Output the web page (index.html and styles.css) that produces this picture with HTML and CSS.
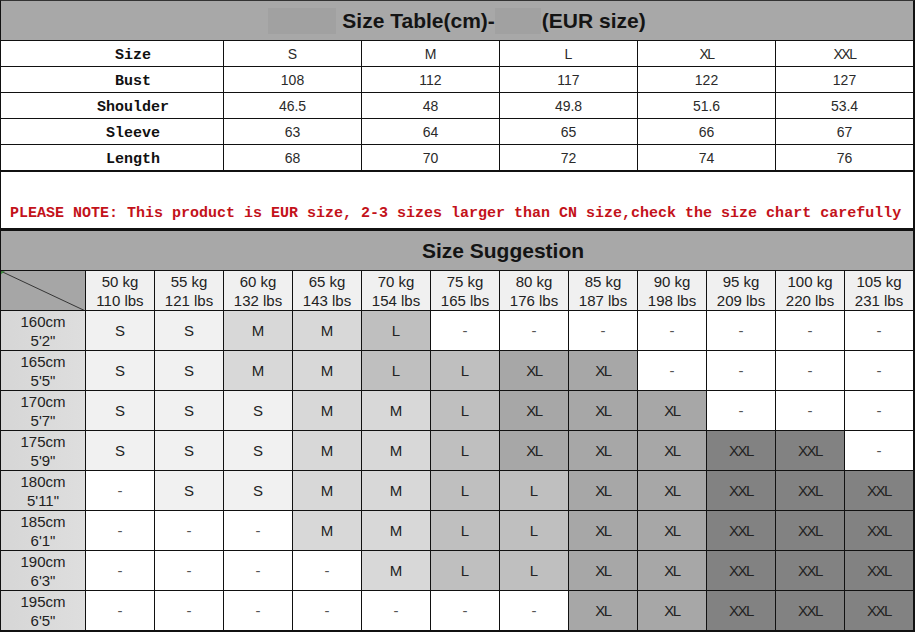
FILE: index.html
```html
<!DOCTYPE html>
<html>
<head>
<meta charset="utf-8">
<link rel="stylesheet" href="styles.css">
</head>
<body>
<div class="sheet">
  <div class="title">
    <span class="blur b1"></span>
    <span class="ttext">Size Table(cm)-</span>
    <span class="blur b2"></span>
    <span class="ttext t2">(EUR size)</span>
  </div>
  <div class="t1">
    <div class="c lab">Size</div><div class="c">S</div><div class="c">M</div><div class="c">L</div><div class="c x">XL</div><div class="c x">XXL</div>
    <div class="c lab">Bust</div><div class="c">108</div><div class="c">112</div><div class="c">117</div><div class="c">122</div><div class="c">127</div>
    <div class="c lab">Shoulder</div><div class="c">46.5</div><div class="c">48</div><div class="c">49.8</div><div class="c">51.6</div><div class="c">53.4</div>
    <div class="c lab">Sleeve</div><div class="c">63</div><div class="c">64</div><div class="c">65</div><div class="c">66</div><div class="c">67</div>
    <div class="c lab">Length</div><div class="c">68</div><div class="c">70</div><div class="c">72</div><div class="c">74</div><div class="c">76</div>
  </div>
  <div class="note">PLEASE NOTE: This product is EUR size, 2-3 sizes larger than CN size,check the size chart carefully</div>
  <div class="title2">Size Suggestion</div>
  <div class="t2g">
    <div class="g corner"><svg width="85" height="40" viewBox="0 0 85 40"><line x1="0" y1="0" x2="85" y2="40" stroke="#333" stroke-width="1"/><path d="M0 0 L4 0 L0 3 Z" fill="#3a8a3a"/></svg></div>
    <div class="g w">50 kg<br>110 lbs</div><div class="g w">55 kg<br>121 lbs</div><div class="g w">60 kg<br>132 lbs</div><div class="g w">65 kg<br>143 lbs</div><div class="g w">70 kg<br>154 lbs</div><div class="g w">75 kg<br>165 lbs</div><div class="g w">80 kg<br>176 lbs</div><div class="g w">85 kg<br>187 lbs</div><div class="g w">90 kg<br>198 lbs</div><div class="g w">95 kg<br>209 lbs</div><div class="g w">100 kg<br>220 lbs</div><div class="g w">105 kg<br>231 lbs</div>

    <div class="g h">160cm<br>5'2"</div><div class="g s">S</div><div class="g s">S</div><div class="g m">M</div><div class="g m">M</div><div class="g l">L</div><div class="g n">-</div><div class="g n">-</div><div class="g n">-</div><div class="g n">-</div><div class="g n">-</div><div class="g n">-</div><div class="g n">-</div>

    <div class="g h">165cm<br>5'5"</div><div class="g s">S</div><div class="g s">S</div><div class="g m">M</div><div class="g m">M</div><div class="g l">L</div><div class="g l">L</div><div class="g xl">XL</div><div class="g xl">XL</div><div class="g n">-</div><div class="g n">-</div><div class="g n">-</div><div class="g n">-</div>

    <div class="g h">170cm<br>5'7"</div><div class="g s">S</div><div class="g s">S</div><div class="g s">S</div><div class="g m">M</div><div class="g m">M</div><div class="g l">L</div><div class="g xl">XL</div><div class="g xl">XL</div><div class="g xl">XL</div><div class="g n">-</div><div class="g n">-</div><div class="g n">-</div>

    <div class="g h">175cm<br>5'9"</div><div class="g s">S</div><div class="g s">S</div><div class="g s">S</div><div class="g m">M</div><div class="g m">M</div><div class="g l">L</div><div class="g xl">XL</div><div class="g xl">XL</div><div class="g xl">XL</div><div class="g xxl">XXL</div><div class="g xxl">XXL</div><div class="g n">-</div>

    <div class="g h">180cm<br>5'11"</div><div class="g n">-</div><div class="g s">S</div><div class="g s">S</div><div class="g m">M</div><div class="g m">M</div><div class="g l">L</div><div class="g l">L</div><div class="g xl">XL</div><div class="g xl">XL</div><div class="g xxl">XXL</div><div class="g xxl">XXL</div><div class="g xxl">XXL</div>

    <div class="g h">185cm<br>6'1"</div><div class="g n">-</div><div class="g n">-</div><div class="g n">-</div><div class="g m">M</div><div class="g m">M</div><div class="g l">L</div><div class="g l">L</div><div class="g xl">XL</div><div class="g xl">XL</div><div class="g xxl">XXL</div><div class="g xxl">XXL</div><div class="g xxl">XXL</div>

    <div class="g h">190cm<br>6'3"</div><div class="g n">-</div><div class="g n">-</div><div class="g n">-</div><div class="g n">-</div><div class="g m">M</div><div class="g l">L</div><div class="g l">L</div><div class="g xl">XL</div><div class="g xl">XL</div><div class="g xxl">XXL</div><div class="g xxl">XXL</div><div class="g xxl">XXL</div>

    <div class="g h">195cm<br>6'5"</div><div class="g n">-</div><div class="g n">-</div><div class="g n">-</div><div class="g n">-</div><div class="g n">-</div><div class="g n">-</div><div class="g n">-</div><div class="g xl">XL</div><div class="g xl">XL</div><div class="g xxl">XXL</div><div class="g xxl">XXL</div><div class="g xxl">XXL</div>
  </div>
</div>
</body>
</html>
```
FILE: styles.css
```css
* { box-sizing: border-box; }
html, body { margin: 0; padding: 0; background: #fff; }
body { font-family: "Liberation Sans", Arial, sans-serif; color: #1c1c1c; }

.sheet {
  width: 915px;
  border-left: 1px solid #111;
  border-right: 2px solid #111;
  border-top: 1px solid #333;
}

.title {
  height: 40px;
  background: #a8a8a8;
  border-bottom: 1px solid #111;
  display: flex;
  align-items: center;
  justify-content: center;
}
.blur { display: block; height: 26px; background: #a1a1a1; }
.b1 { width: 68px; margin-right: 6px; }
.b2 { width: 46px; margin-right: 1px; }
.ttext { font-weight: bold; font-size: 21px; color: #141414; }

.t1 {
  display: grid;
  grid-template-columns: 223px 138px 138px 138px 138px 137px;
}
.t1 .c {
  height: 26px;
  border-right: 1px solid #111;
  border-bottom: 1px solid #111;
  display: flex;
  align-items: center;
  justify-content: center;
  font-size: 14px;
  color: #2a2a2a;
}
.t1 .c:nth-child(6n) { border-right: none; }
.t1 .c:nth-last-child(-n+6) { height: 27px; border-bottom-width: 2px; }
.t1 .lab {
  font-family: "Liberation Mono", "DejaVu Sans Mono", monospace;
  font-weight: bold;
  font-size: 15px;
  color: #111;
  padding-left: 42px;
  padding-top: 3px;
}
.x { letter-spacing: -1.5px; }

.note {
  height: 59px;
  border-bottom: 3px solid #111;
  padding: 33px 0 0 9px;
  font-family: "Liberation Mono", "DejaVu Sans Mono", monospace;
  font-weight: bold;
  font-size: 15px;
  line-height: 18px;
  color: #c3121a;
  white-space: nowrap;
}

.title2 {
  height: 40px;
  background: #a8a8a8;
  border-bottom: 1px solid #111;
  display: flex;
  align-items: center;
  justify-content: center;
  padding-left: 92px;
  font-weight: bold;
  font-size: 21px;
  color: #141414;
}

.t2g {
  display: grid;
  grid-template-columns: 85px repeat(11, 69px) 68px;
}
.g {
  height: 40px;
  border-right: 1px solid #111;
  border-bottom: 1px solid #111;
  display: flex;
  align-items: center;
  justify-content: center;
  text-align: center;
  font-size: 15px;
  line-height: 19px;
  color: #222;
}
.g:nth-child(13n) { border-right: none; }
.g:nth-last-child(-n+13) { height: 41px; border-bottom-width: 2px; }

.corner { background: #a6a6a6; padding: 0; overflow: hidden; align-items: flex-start; justify-content: flex-start; }
.corner svg { display: block; }
.w { background: #f0f0f0; }
.h { background: linear-gradient(90deg, #d6d6d6, #dedede); }
.s { background: #f1f1f1; }
.m { background: #d8d8d8; }
.l { background: #bfbfbf; }
.xl { background: #a7a7a7; letter-spacing: -1.5px; }
.xxl { background: #828282; letter-spacing: -1.5px; }
.n { background: #fff; color: #555; }
```
